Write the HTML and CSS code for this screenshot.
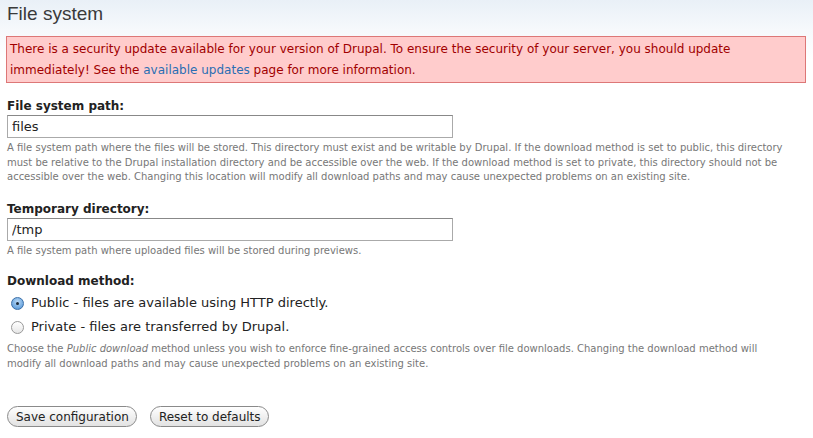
FILE: index.html
```html
<!DOCTYPE html>
<html lang="en">
<head>
  <meta charset="UTF-8">
  <title>File system</title>
  <link rel="stylesheet" href="styles.css">
</head>
<body>
  <div class="page">
    <h1 class="title">File system</h1>

    <div class="messages error">
      There is a security update available for your version of Drupal. To ensure the security of your server, you should update
      immediately! See the <a href="#">available updates</a> page for more information.
    </div>

    <form class="settings">
      <div class="form-item">
        <label for="file-path">File system path:</label>
        <input type="text" id="file-path" class="form-text" value="files">
        <div class="description">A file system path where the files will be stored. This directory must exist and be writable by Drupal. If the download method is set to public, this directory must be relative to the Drupal installation directory and be accessible over the web. If the download method is set to private, this directory should not be accessible over the web. Changing this location will modify all download paths and may cause unexpected problems on an existing site.</div>
      </div>

      <div class="form-item">
        <label for="tmp-path">Temporary directory:</label>
        <input type="text" id="tmp-path" class="form-text" value="/tmp">
        <div class="description">A file system path where uploaded files will be stored during previews.</div>
      </div>

      <div class="form-item method">
        <label>Download method:</label>
        <div class="radios">
          <label class="option"><span class="radio checked"></span>Public - files are available using HTTP directly.</label>
          <label class="option"><span class="radio"></span>Private - files are transferred by Drupal.</label>
        </div>
        <div class="description">Choose the <em>Public download</em> method unless you wish to enforce fine-grained access controls over file downloads. Changing the download method will modify all download paths and may cause unexpected problems on an existing site.</div>
      </div>

      <div class="buttons">
        <button type="button" class="form-submit">Save configuration</button>
        <button type="button" class="form-submit">Reset to defaults</button>
      </div>
    </form>
  </div>
</body>
</html>
```

FILE: styles.css
```css
html, body {
  margin: 0;
  padding: 0;
}

body {
  font-family: "DejaVu Sans", Verdana, sans-serif;
  font-size: 12px;
  color: #222;
  background: linear-gradient(to bottom, #e9f0f7 0px, #f6f9fc 30px, #fff 60px);
  min-height: 438px;
}

.page {
  padding: 0 7px 0 6px;
}

.title {
  margin: 0;
  padding: 2px 0 0 1px;
  font-family: "Liberation Sans", Arial, sans-serif;
  font-weight: normal;
  font-size: 19px;
  line-height: 24px;
  color: #3a3a3a;
}

.messages {
  margin-top: 10px;
  padding: 2px 4px 1px 3px;
  line-height: 21px;
  font-size: 12px;
}

.error {
  background: #ffcccc;
  border: 1px solid #dd7777;
  color: #a10000;
}

.error a {
  color: #2a6eb3;
  text-decoration: none;
}

.settings {
  padding-left: 1px;
}

.form-item {
  margin-top: 15px;
}

.form-item + .form-item {
  margin-top: 16px;
}

.form-item.method {
  margin-top: 15px;
}

.form-item > label {
  display: block;
  font-weight: bold;
  font-size: 12px;
  line-height: 16px;
  margin-bottom: 1px;
}

.form-text {
  display: block;
  box-sizing: border-box;
  width: 446px;
  height: 23px;
  margin: 0;
  padding: 1px 4px;
  border: 1px solid #aaa;
  border-top-color: #888;
  font-family: "DejaVu Sans", Verdana, sans-serif;
  font-size: 13px;
  color: #222;
  background: #fff;
}

.description {
  max-width: 780px;
  margin-top: 3px;
  font-size: 10px;
  line-height: 14.5px;
  color: #777;
}

.radios {
  padding-left: 4px;
  margin-top: 2px;
}

.option {
  display: flex;
  align-items: center;
  font-size: 13px;
  line-height: 24px;
}

.radio {
  box-sizing: border-box;
  width: 13px;
  height: 13px;
  margin-right: 7px;
  border: 1px solid #999;
  border-radius: 50%;
  background: linear-gradient(#fff, #e6e6e6);
  position: relative;
}

.radio.checked {
  border-color: #3b6fa8;
  background: radial-gradient(circle at 50% 35%, #b9d9f6, #4a8fd4);
}

.radio.checked::after {
  content: "";
  position: absolute;
  left: 4px;
  top: 4px;
  width: 3px;
  height: 3px;
  border-radius: 50%;
  background: #1c2a3a;
}

.buttons {
  display: flex;
  gap: 13px;
  margin-top: 35px;
}

.form-submit {
  font-family: "DejaVu Sans", Verdana, sans-serif;
  font-size: 12px;
  height: 21px;
  padding: 0 7px 0 8px;
  border: 1px solid #8a8a8a;
  border-radius: 11px;
  color: #222;
  background: linear-gradient(#ffffff, #f0f0f0 50%, #e2e2e2);
}
```
